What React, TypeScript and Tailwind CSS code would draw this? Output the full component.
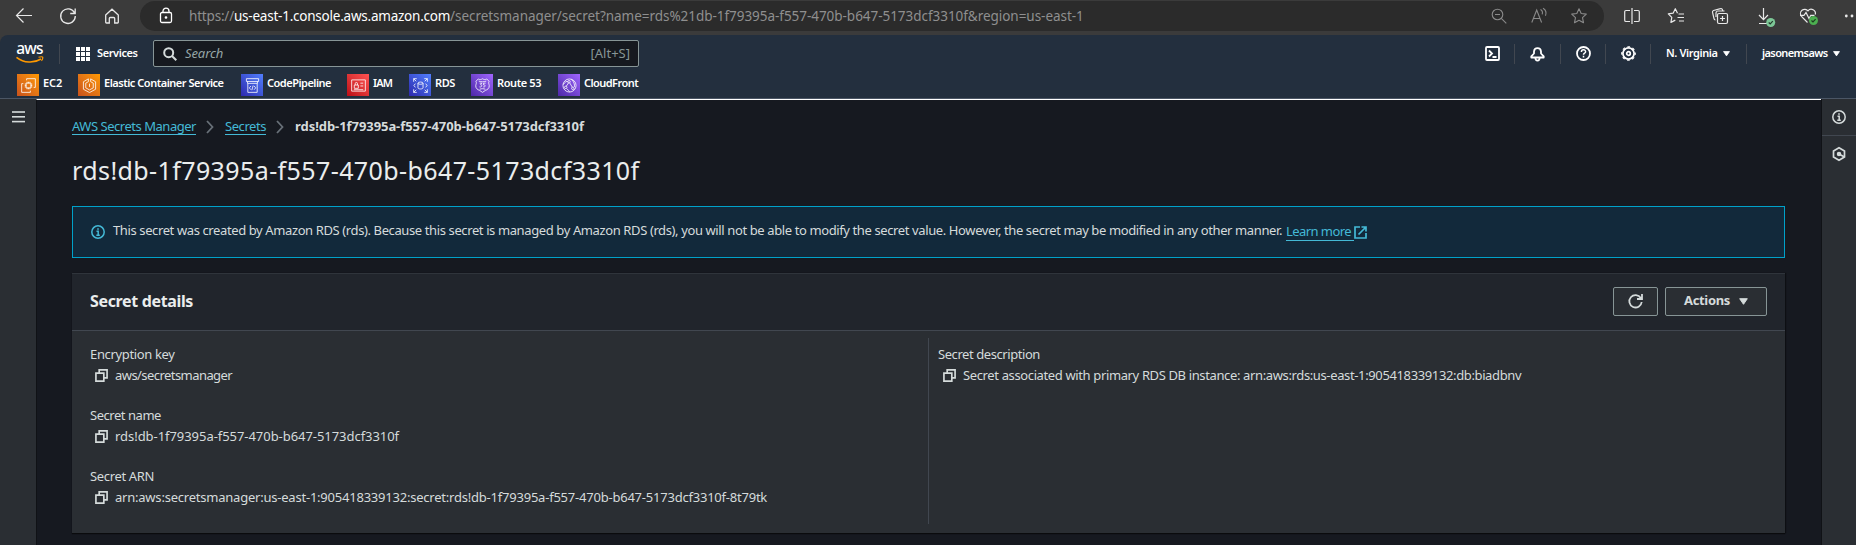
import React from "react";
import type { ReactNode } from "react";

type Kids = { children?: ReactNode };

function Line({ size = 16, box = 16, sw = 1.2, className = "", children }: Kids & { size?: number; box?: number; sw?: number; className?: string }) {
  return (
    <svg width={size} height={size} viewBox={`0 0 ${box} ${box}`} fill="none" stroke="currentColor" strokeWidth={sw} className={`shrink-0 overflow-visible ${className}`}>
      {children}
    </svg>
  );
}

const starPath = "M8 .8l2.200 4.700 5.100.6-3.800 3.500 1 5.100L8 12.200 3.500 14.700l1-5.100L.7 6.100l5.100-.6z";

function BrowserBar() {
  return (
    <div className="flex h-[35px] w-full items-start overflow-hidden bg-[#3b3b3b] text-[#e8e8e8]">
      <div className="flex h-8 w-[140px] shrink-0 items-center">
        <Line className="ml-4"><path d="M16 7.500H.7M7.500.5l-7 7 7 7" /></Line>
        <Line className="ml-7" sw={1.300}><path d="M14.600 5A7.300 7.300 0 1 0 15.300 8M15.200.5v5h-5" /></Line>
        <Line className="ml-[28px]" sw={1.300}><path d="M1.700 7L8 1.200 14.300 7v7.300a.7.7 0 0 1-.7.7h-2.900V10.500a1 1 0 0 0-1-1H6.300a1 1 0 0 0-1 1V15H2.400a.7.7 0 0 1-.7-.7z" /></Line>
      </div>
      <div className="mt-px flex h-[30px] w-[1464px] shrink-0 items-center rounded-full bg-[#2b2b2b]">
        <Line className="ml-[18px] text-white" sw={1.300}>
          <rect x="2.500" y="4.500" width="11" height="10" rx="1.500" />
          <path d="M5 4.500V3.200a3 3 0 0 1 6 0v1.300" />
          <circle cx="8" cy="9.500" r=".7" fill="currentColor" />
        </Line>
        <div className="ml-[15px] flex whitespace-pre text-[13.5px] leading-[28px] text-[#8f8f8f]">
          <span className="w-[45px] tracking-[-0.19px]">https://</span>
          <span className="w-[216px] tracking-[-0.23px] text-white">us-east-1.console.aws.amazon.com</span>
          <span className="tracking-[-0.04px]">/secretsmanager/secret?name=rds%21db-1f79395a-f557-470b-b647-5173dcf3310f&amp;region=us-east-1</span>
        </div>
        <div className="ml-auto mr-[5px] flex text-[#8a8a8a]">
          <span className="flex w-10 justify-center"><Line sw={1.100}><circle cx="6.500" cy="6.500" r="5.300" /><path d="M10.300 10.300l5 5M4 6.500h5" /></Line></span>
          <span className="flex w-10 justify-center"><Line sw={1.100}><path d="M.8 14.500L5.700 2l4.900 12.500M2.400 10.500H9M9.500 1.500c1.700 1 2.300 3 1.700 4.800M12 .2c2.600 1.600 3.600 4.700 2.500 7.600" /></Line></span>
          <span className="flex w-10 justify-center"><Line sw={1.100}><path d={starPath} strokeLinejoin="round" /></Line></span>
        </div>
      </div>
      <div className="ml-[6px] flex h-8 shrink-0 items-center">
        <span className="flex w-11 justify-center"><Line><path d="M6 2.500H2A1.300 1.300 0 0 0 .7 3.800v8.400A1.300 1.300 0 0 0 2 13.500h4M10 2.500h4a1.300 1.300 0 0 1 1.300 1.300v8.400a1.300 1.300 0 0 1-1.300 1.300h-4M8 0v16" /></Line></span>
        <span className="flex w-11 justify-center"><Line><path d="M9.500 5.200L7.300.7 5.100 5.200.3 5.900l3.500 3.500-.9 5 4.400-2.300M10.500 6H16M9.500 9.500H16M11 13h5" strokeLinejoin="round" /></Line></span>
        <span className="flex w-11 justify-center"><Line><rect x="5.500" y="5.500" width="10" height="10" rx="1.500" /><path d="M10.500 8v5M8 10.500h5M3.500 12A1.500 1.500 0 0 1 2 10.700L.5 4.200A1.500 1.500 0 0 1 1.500 2.500L8.500.6a1.500 1.500 0 0 1 1.900 1l.5 1.600M4 9V5a2 2 0 0 1 2-2h6.500" /></Line></span>
        <span className="flex w-11 justify-center pl-[6px]">
          <Line><path d="M4.500 0v11.500M0 7l4.500 4.700L9 7M0 15.500h8" /><circle cx="11.700" cy="14.500" r="4.500" fill="#7cc796" stroke="none" /><path d="M9.700 14.500l1.500 1.500 2.600-2.800" stroke="#23392b" /></Line>
        </span>
        <span className="flex w-11 justify-center">
          <Line><path d="M7.500 14.500L1.500 8.300a4.200 4.200 0 0 1 6.500-5.500 4.200 4.200 0 0 1 7.300 3.700M0 7.300h4L6 4.500l3 6 1.800-3.200h3.700" /><circle cx="13.500" cy="12.500" r="4.500" fill="#4caf50" stroke="none" /><path d="M11.500 12.500L13 14l2.600-2.800" stroke="#1d3a1f" /></Line>
        </span>
        <span className="flex w-11 justify-center"><Line><g fill="currentColor" stroke="none"><circle cx="2.300" cy="8" r="1.400" /><circle cx="8" cy="8" r="1.400" /><circle cx="14" cy="8" r="1.400" /></g></Line></span>
      </div>
    </div>
  );
}

function AwsLogo() {
  return (
    <div className="flex w-[27px] flex-col items-center text-white">
      <span className="h-[12px] text-[15.5px] font-medium leading-[8px] tracking-[-0.8px]">aws</span>
      <svg width="28" height="8" viewBox="0 0 28 8" fill="none" stroke="#ff9900" strokeWidth="1.500">
        <path d="M.5 1.300C8 7.200 18 7.400 25 3" />
        <path d="M22.500 1.200c2-.6 4.200-.6 4.300 0s-.2 2.400-1.300 3.600" strokeWidth="1.200" />
      </svg>
    </div>
  );
}

function Caret({ size = 7 }: { size?: number }) {
  return (
    <svg width={size} height={size * 0.78} viewBox="0 0 9 7" fill="currentColor" stroke="currentColor" strokeLinejoin="round" className="shrink-0"><path d="M.7.7h7.600L4.500 6.300z" /></svg>
  );
}

const Sep = () => <span className="h-5 w-px shrink-0 bg-[#414750]" />;

function Tile({ className, children }: Kids & { className: string }) {
  return (
    <span className={`flex size-[22px] shrink-0 items-center justify-center ${className}`}>
      <Line size={15} sw={0.950} className="text-white/90">{children}</Line>
    </span>
  );
}

const orange = "bg-linear-to-tr from-[#c8511b] to-[#ff9900]";
const blue = "bg-linear-to-tr from-[#2e27ad] to-[#527fff]";
const red = "bg-linear-to-tr from-[#bd0816] to-[#ff5252]";
const purple = "bg-linear-to-tr from-[#4d27a8] to-[#a166ff]";

const services = [
  { name: "EC2", width: "w-[61px]", track: "tracking-[-0.1px]", tile: orange, art: <><path d="M5.500 5.500v5H10.500v-5zM6.500 5.500V4M8 5.500V4M9.500 5.500V4M6.500 12v-1.500M8 12v-1.500M9.500 12v-1.500M5.500 6.500H4M5.500 8H4M5.500 9.500H4M12 6.500h-1.500M12 8h-1.500M12 9.500h-1.500" /><path d="M6 2.500V.7h9.300V10H13.500M2.500 6H.7v9.300H10V13.500" /></> },
  { name: "Elastic Container Service", width: "w-[163px]", track: "tracking-[-0.47px]", tile: orange, art: <><path d="M6.800.9L1.500 4v8l6.500 3.500 6.500-3.500V4L9.200.9M6.800.9v3L4 5.500v5L8 12.700l4-2.200v-5L9.200 3.900v-3M8 6v3.500" /></> },
  { name: "CodePipeline", width: "w-[106px]", track: "tracking-[-0.5px]", tile: blue, art: <><path d="M1.500.7h13v3h-13zM2.700 3.700v2h10.600v-2M3 5.700v9.600h10V5.700M6.300 8.500L4.600 10.500l1.700 2M9.700 8.500l1.700 2-1.700 2M8.700 8l-1.400 5" /></> },
  { name: "IAM", width: "w-[62px]", track: "tracking-[-0.85px]", tile: red, art: <><path d="M.7 2h14.600v12H.7zM3.500 7.500h4.300V11H3.500zM4.500 7.500V6a1.200 1.200 0 0 1 2.400 0v1.500M10 5.500h3M10 8.500h3M3 12.500h10" /></> },
  { name: "RDS", width: "w-[62px]", track: "tracking-[-0.4px]", tile: blue, art: <><ellipse cx="8" cy="5.500" rx="2.700" ry="1.200" /><path d="M5.300 5.500v5c0 .7 1.200 1.200 2.700 1.200s2.700-.5 2.700-1.200v-5M.7 4V.7H4M.7.7L3.500 3.500M12 .7h3.300V4M15.300.7l-2.800 2.800M.7 12v3.300H4M.7 15.300l2.800-2.800M12 15.300h3.300V12M15.300 15.300l-2.800-2.800M2.500 6L1 8l1.500 2M13.500 6L15 8l-1.500 2" /></> },
  { name: "Route 53", width: "w-[87px]", track: "tracking-[-0.4px]", tile: purple, art: <><path d="M3.500 1C5 2 6.500 1.800 8 .8c1.500 1 3 1.200 4.500.2L15 3.500c-1 1.500 0 3 .2 4.500.3 3-2 4.500-4.200 5.300L8 15.300l-3-2C2.800 12.500.5 11 .8 8 1 6.500 2 5 1 3.500z" /><path d="M5 5.500h2.300L6 7.300c2 0 1.700 2.800-1.200 2.200M11.300 5.500H9v1.800c2.300-.4 2.800 2.700-.3 2.200M4 3.300c3 1 5 1 8 0M5 12c2-.8 4-.8 6 0" /></> },
  { name: "CloudFront", width: "w-[90px]", track: "tracking-[-0.55px]", tile: purple, art: <><circle cx="8" cy="8" r="7" /><circle cx="7.500" cy="4" r="1.300" /><circle cx="4" cy="10" r="1.300" /><circle cx="11.500" cy="11" r="1.300" /><path d="M7 5.200L4.500 8.800M8.200 5.200l2.800 4.600M10 1.500c3 2.500 3.500 5.500 3.300 8M1.300 7c2-3 4-4 5-3M5 11.500c2 1.500 3 2.500 3 3.500" /></> },
];

function ConsoleNav() {
  return (
    <div className="bg-[#3b3b3b]">
      <header className="h-[64px] rounded-tl-lg border-b border-[#4b5665] bg-[#232f3e] font-semibold text-white">
        <div className="flex h-[37px] items-center text-[11px]">
          <div className="ml-4 w-[43px]"><AwsLogo /></div>
          <Sep />
          <svg width="14" height="14" viewBox="0 0 14 14" fill="currentColor" className="ml-4 shrink-0">
            {[0, 5, 10].map((y) => [0, 5, 10].map((x) => <rect key={`${x}-${y}`} x={x} y={y} width="4" height="4" />))}
          </svg>
          <span className="ml-[7px] w-[56px] tracking-[-0.4px]">Services</span>
          <div className="flex h-[27px] w-[486px] items-center rounded-[2px] border border-[#879596] bg-[#16191f]">
            <Line size={14} box={14} sw={2} className="ml-[9px] text-[#d5dbdb]"><circle cx="5.700" cy="5.700" r="4.500" /><path d="M9 9l4.300 4.300" /></Line>
            <span className="ml-2 text-[13px] font-normal italic tracking-[-0.1px] text-[#95a5a6]">Search</span>
            <span className="ml-auto mr-2 text-[13px] font-normal text-[#879596]">[Alt+S]</span>
          </div>
          <div className="ml-auto flex items-center">
            <span className="flex w-11 justify-center"><Line size={15} box={15} sw={1.800}><rect x="1" y="1" width="13" height="13" rx="1" /><path d="M4 4.500l3 3-3 3M7.500 11h4" /></Line></span>
            <Sep />
            <span className="flex w-[45px] justify-center"><Line size={15} box={15} sw={1.800} className="mt-px"><path d="M7.500 1.200C5.300 1.200 4.200 2.500 4 4.500v2L1.300 9.300v1.200h12.400V9.300L11 6.500v-2C10.800 2.500 9.700 1.200 7.500 1.200zM5.300 10.800c.2 3.800 4.200 3.800 4.400 0" strokeLinejoin="round" /></Line></span>
            <Sep />
            <span className="flex w-11 justify-center"><Line size={15} box={15} sw={1.800}><circle cx="7.500" cy="7.500" r="6.500" /><path d="M5.400 6c0-2.900 4.200-2.800 4.200-.3 0 1.500-2.100 1.500-2.100 3M7.500 9.800v1.700" strokeWidth="1.500" /></Line></span>
            <Sep />
            <span className="flex w-11 justify-center"><Line size={15} box={15} sw={1.700}><circle cx="7.500" cy="7.500" r="5.600" /><circle cx="7.500" cy="7.500" r="1.800" /><circle cx="7.500" cy="7.500" r="6.700" strokeWidth="1.300" strokeDasharray="2.630 2.630" strokeDashoffset="1.300" /></Line></span>
            <Sep />
            <span className="flex w-[95px] items-center pl-[15px]"><span className="w-[57px] tracking-[-0.4px]">N. Virginia</span><Caret /></span>
            <Sep />
            <span className="flex w-[109px] items-center pl-[15px]"><span className="w-[71px] tracking-[-0.6px]">jasonemsaws</span><Caret /></span>
          </div>
        </div>
        <div className="ml-[17px] mt-[2px] flex text-[11px]">
          {services.map((s) => (
            <div key={s.name} className={`flex shrink-0 ${s.width}`}>
              <Tile className={s.tile}>{s.art}</Tile>
              <span className={`ml-1 whitespace-nowrap leading-[18px] ${s.track}`}>{s.name}</span>
            </div>
          ))}
        </div>
      </header>
    </div>
  );
}

function CopyIcon() {
  return (
    <Line size={13} box={14} sw={1.800} className="mt-[4px]"><path d="M1 4.500h8.500V13H1zM4.500 4.500V1H13v8.500H9.500" /></Line>
  );
}

function Field({ label, value, labelTrack, valueTrack }: { label: string; value: string; labelTrack: string; valueTrack: string }) {
  return (
    <div className="h-[61px]">
      <div className={`leading-[22px] ${labelTrack}`}>{label}</div>
      <div className="flex pl-[5px] leading-[20px]">
        <CopyIcon />
        <span className={`ml-[7px] whitespace-nowrap ${valueTrack}`}>{value}</span>
      </div>
    </div>
  );
}

function Info({ size, className }: { size: number; className?: string }) {
  return (
    <Line size={size} box={14} sw={1.500} className={className}><circle cx="7" cy="7" r="6.200" /><path d="M5.500 6.300h1.700v3.900M5.300 10.300h3.500M6.200 4h1.600" /></Line>
  );
}

const Chevron = ({ className }: { className: string }) => (
  <svg width="8" height="14" viewBox="0 0 8 14" fill="none" stroke="#687078" strokeWidth="1.800" className={className}><path d="M1 1l5.500 6L1 13" /></svg>
);

export default function App() {
  return (
    <div className="flex h-[545px] w-[1856px] flex-col overflow-hidden bg-[#161920] font-['Noto_Sans','Open_Sans',sans-serif] text-[13px] text-[#d5dbdb]">
      <BrowserBar />
      <ConsoleNav />
      <div className="flex min-h-0 flex-1">
        <aside className="flex w-9 shrink-0 justify-center bg-[#2a2e33] pt-3">
          <svg width="13" height="12" viewBox="0 0 13 12" fill="currentColor"><rect width="13" height="1.600" y=".2" /><rect width="13" height="1.600" y="5" /><rect width="13" height="1.600" y="9.800" /></svg>
        </aside>
        <main className="flex-1 border-l border-t border-l-[#101216] border-t-white pl-[35px] pr-9">
          <nav className="mt-[16px] flex h-[20px] items-start">
            <a className="h-[19px] border-b border-[#44b9d6] leading-[20px] tracking-[-0.47px] text-[#44b9d6]">AWS Secrets Manager</a>
            <Chevron className="ml-[10px] mt-[4px]" />
            <a className="ml-[11px] h-[19px] border-b border-[#44b9d6] leading-[20px] tracking-[-0.44px] text-[#44b9d6]">Secrets</a>
            <Chevron className="ml-[10px] mt-[4px]" />
            <span className="ml-[11px] font-bold leading-[20px] tracking-[-0.06px]">rds!db-1f79395a-f557-470b-b647-5173dcf3310f</span>
          </nav>
          <h1 className="mt-[18px] h-[52px] text-[25px] leading-[32px] tracking-[0.4px] text-[#eaeded]">rds!db-1f79395a-f557-470b-b647-5173dcf3310f</h1>
          <div className="flex h-[52px] items-center border border-[#00a1c9] bg-[#12293b] pl-[18px]">
            <Info size={14} className="text-[#44b9d6]" />
            <span className="ml-2 w-[1172px] whitespace-nowrap pb-[3px] tracking-[-0.387px]">This secret was created by Amazon RDS (rds). Because this secret is managed by Amazon RDS (rds), you will not be able to modify the secret value. However, the secret may be modified in any other manner.</span>
            <a className="ml-px mb-[1px] h-[18px] border-b border-[#44b9d6] pr-[3px] leading-[16px] tracking-[-0.57px] text-[#44b9d6]">Learn more</a>
            <Line size={13} box={13} sw={1.700} className="text-[#44b9d6]"><path d="M6 1H1v11h11V7M7.500 1H12v4.500M12 1L4.500 8.500" /></Line>
          </div>
          <section className="mt-[15px] h-[260px] border-t border-[#2f343b] bg-[#2a2e33] shadow-[0_1px_1px_#0a0b0d,1px_0_1px_#0f1115]">
            <div className="flex h-[57px] items-center border-b border-[#414750] bg-[#21252c] px-[18px] pb-px">
              <h2 className="pb-[2px] text-[16px] font-bold tracking-[-0.35px] text-[#eaeded]">Secret details</h2>
              <button className="ml-auto flex h-[29px] w-[45px] items-center justify-center rounded-[2px] border border-[#879596] bg-[#2a2e33]">
                <Line size={15} box={15} sw={1.800}><path d="M12.800 4A6.200 6.200 0 1 0 13.700 8M14 0v5H9" /></Line>
              </button>
              <button className="ml-[7px] flex h-[29px] w-[102px] items-center rounded-[2px] border border-[#879596] bg-[#2a2e33] pl-[18px] font-bold">
                <span className="mb-px w-[55px] text-left tracking-[-0.33px]">Actions</span><Caret size={9} />
              </button>
            </div>
            <div className="flex pt-[7px]">
              <div className="h-[186px] w-[857px] border-r border-[#414750] pl-[18px] pt-[5px]">
                <Field label="Encryption key" value="aws/secretsmanager" labelTrack="tracking-[-0.35px]" valueTrack="tracking-[-0.56px]" />
                <Field label="Secret name" value="rds!db-1f79395a-f557-470b-b647-5173dcf3310f" labelTrack="tracking-[-0.46px]" valueTrack="tracking-[-0.05px]" />
                <Field label="Secret ARN" value="arn:aws:secretsmanager:us-east-1:905418339132:secret:rds!db-1f79395a-f557-470b-b647-5173dcf3310f-8t79tk" labelTrack="tracking-[-0.35px]" valueTrack="tracking-[-0.22px]" />
              </div>
              <div className="pl-[9px] pt-[5px]">
                <Field label="Secret description" value="Secret associated with primary RDS DB instance: arn:aws:rds:us-east-1:905418339132:db:biadbnv" labelTrack="tracking-[-0.43px]" valueTrack="tracking-[-0.37px]" />
              </div>
            </div>
          </section>
        </main>
        <aside className="flex w-[35px] shrink-0 flex-col items-center border-l border-[#101216] bg-[#2a2e33]">
          <div className="flex h-[37px] w-full items-center justify-center border-b border-[#414750]"><Info size={14} /></div>
          <Line size={14} box={14} sw={1.700} className="mt-[11px]"><path d="M7 .8l5.500 3.100v6.200L7 13.200l-5.500-3.100V3.900z" /><circle cx="7" cy="7" r="1.400" fill="currentColor" /><path d="M7 7l5 2.800" /></Line>
        </aside>
      </div>
    </div>
  );
}
